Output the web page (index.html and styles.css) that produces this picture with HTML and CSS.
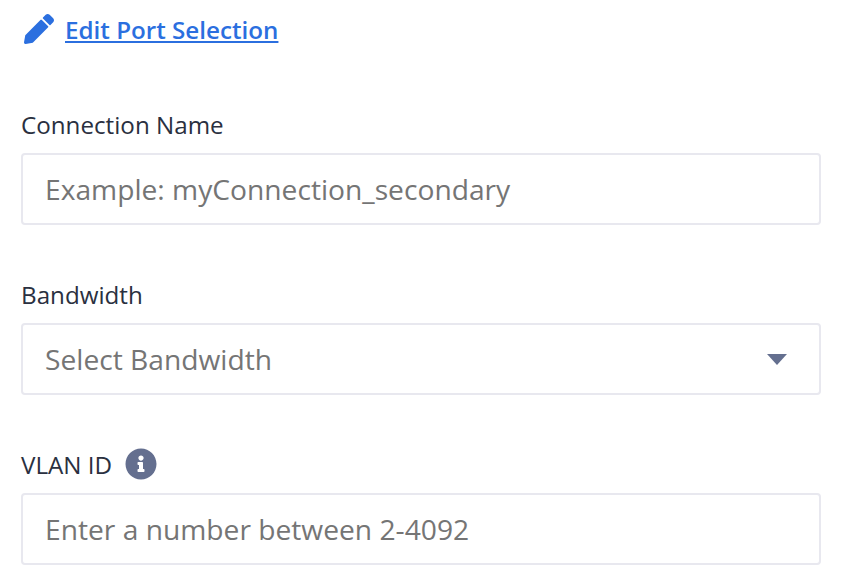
FILE: index.html
```html
<!DOCTYPE html>
<html lang="en">
<head>
<meta charset="utf-8">
<title>Connection</title>
<link rel="stylesheet" href="styles.css">
</head>
<body>
<main class="form">
  <div class="edit-row">
    <svg class="pencil" viewBox="0 0 512 512" aria-hidden="true"><path d="M497.9 142.1l-46.1 46.1c-4.7 4.7-12.3 4.7-17 0l-111-111c-4.7-4.7-4.7-12.3 0-17l46.1-46.1c18.7-18.7 49.1-18.7 67.9 0l60.1 60.1c18.8 18.7 18.8 49.1 0 67.9zM284.2 99.8L21.6 362.4.4 483.9c-2.9 16.4 11.4 30.6 27.8 27.8l121.5-21.3 262.6-262.6c4.7-4.7 4.7-12.3 0-17l-111-111c-4.8-4.7-12.4-4.7-17.1 0z"/></svg>
    <a class="edit-link" href="#">Edit Port Selection</a>
  </div>
  <div class="field">
    <label class="label">Connection Name</label>
    <div class="control"><span class="placeholder">Example: myConnection_secondary</span></div>
  </div>
  <div class="field">
    <label class="label">Bandwidth</label>
    <div class="control"><span class="placeholder">Select Bandwidth</span><span class="caret"></span></div>
  </div>
  <div class="field">
    <label class="label">VLAN ID
      <svg class="info" viewBox="0 0 512 512" aria-hidden="true"><path d="M256 8C119 8 8 119.1 8 256c0 137 111 248 248 248s248-111 248-248C504 119.1 393 8 256 8zm0 110c23.2 0 42 18.8 42 42s-18.8 42-42 42-42-18.8-42-42 18.8-42 42-42zm56 254c0 6.6-5.4 12-12 12h-88c-6.6 0-12-5.4-12-12v-24c0-6.6 5.4-12 12-12h12v-64h-12c-6.6 0-12-5.4-12-12v-24c0-6.6 5.4-12 12-12h64c6.6 0 12 5.4 12 12v100h12c6.6 0 12 5.4 12 12v24z"/></svg>
    </label>
    <div class="control"><span class="placeholder">Enter a number between 2-4092</span></div>
  </div>
</main>
</body>
</html>
```
FILE: styles.css
```css
html, body {
  margin: 0;
  padding: 0;
  background: #fff;
}
body {
  font-family: "Open Sans", sans-serif;
  width: 860px;
  height: 588px;
  overflow: hidden;
}
.form {
  display: flex;
  flex-direction: column;
  gap: 52px;
  width: 800px;
  padding: 12px 0 0 21px;
}
.edit-row {
  display: flex;
  align-items: center;
  gap: 11px;
  height: 34px;
  margin-bottom: 9px;
}
.pencil {
  width: 30px;
  height: 30px;
  margin-left: 3px;
  fill: #2b6fdf;
}
.edit-link {
  font-size: 24.2px;
  font-weight: 600;
  color: #2b6fdf;
  text-decoration: underline;
}
.field {
  display: flex;
  flex-direction: column;
}
.label {
  display: flex;
  align-items: center;
  gap: 13px;
  height: 34px;
  margin-bottom: 12px;
  font-size: 24.2px;
  color: #2a3040;
}
.info {
  width: 32px;
  height: 32px;
  fill: #646f8f;
}
.control {
  display: flex;
  align-items: center;
  justify-content: space-between;
  box-sizing: border-box;
  height: 72px;
  padding: 0 32px 0 22px;
  border: 2px solid #e8e8ef;
  border-radius: 4px;
}
.placeholder {
  font-size: 28.2px;
  color: #757575;
}
.caret {
  width: 0;
  height: 0;
  border-left: 10px solid transparent;
  border-right: 10px solid transparent;
  border-top: 11px solid #646f8f;
}
```
